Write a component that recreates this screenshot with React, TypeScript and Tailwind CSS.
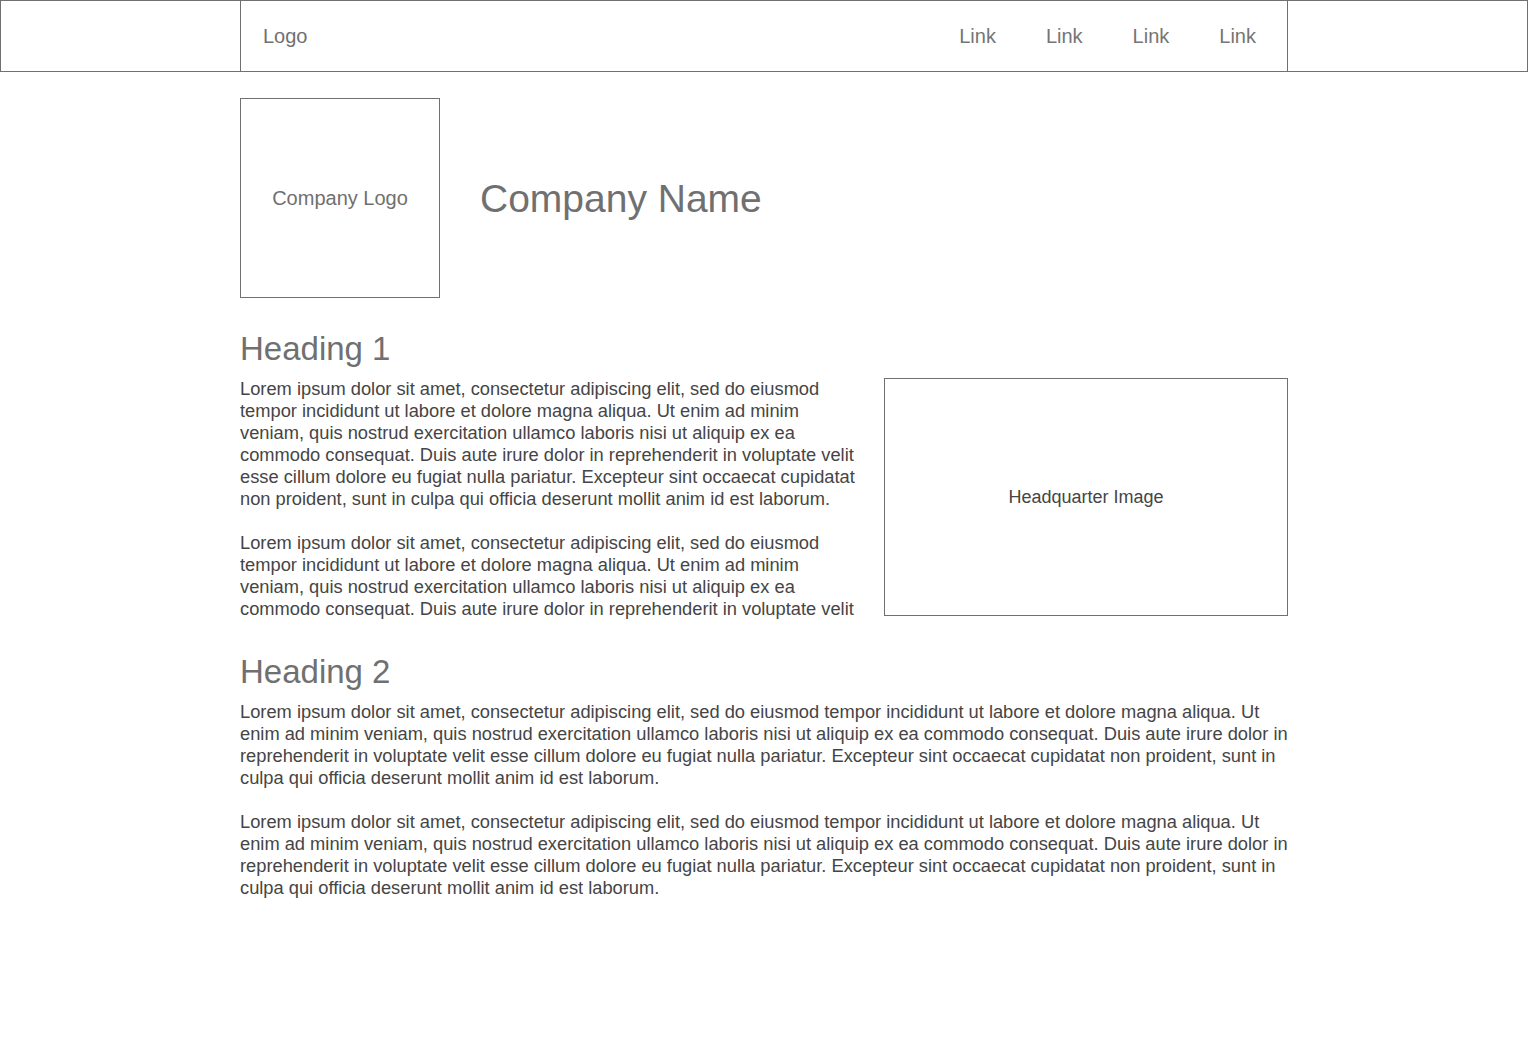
import React from 'react';

const LOREM =
  'Lorem ipsum dolor sit amet, consectetur adipiscing elit, sed do eiusmod tempor incididunt ut labore et dolore magna aliqua. Ut enim ad minim veniam, quis nostrud exercitation ullamco laboris nisi ut aliquip ex ea commodo consequat. Duis aute irure dolor in reprehenderit in voluptate velit esse cillum dolore eu fugiat nulla pariatur. Excepteur sint occaecat cupidatat non proident, sunt in culpa qui officia deserunt mollit anim id est laborum.';

// second paragraph in the narrow column is cut short in the design
const LOREM_SHORT =
  'Lorem ipsum dolor sit amet, consectetur adipiscing elit, sed do eiusmod tempor incididunt ut labore et dolore magna aliqua. Ut enim ad minim veniam, quis nostrud exercitation ullamco laboris nisi ut aliquip ex ea commodo consequat. Duis aute irure dolor in reprehenderit in voluptate velit';

const links = ['Link', 'Link', 'Link', 'Link'];

export default function App() {
  return (
    <div className="min-h-screen bg-white font-['Liberation_Sans',Arial,sans-serif] text-[#707070]">
      {/* Top bar */}
      <header className="border border-[#707070]">
        <div className="mx-auto flex h-[70px] w-[1048px] items-center justify-between border-x border-[#707070] pl-[22px] pr-[31px]">
          <span className="text-[20px]">Logo</span>
          <nav className="flex gap-[50px] text-[20px]">
            {links.map((l, i) => (
              <a key={i} href="#" className="text-[#757575]">
                {l}
              </a>
            ))}
          </nav>
        </div>
      </header>

      <main className="mx-auto w-[1048px] pt-[26px]">
        {/* Company header */}
        <div className="flex items-center gap-10">
          <div className="flex h-[200px] w-[200px] items-center justify-center border border-[#707070] text-[20px]">
            Company Logo
          </div>
          <h1 className="text-[39px] leading-none">Company Name</h1>
        </div>

        {/* Section 1 */}
        <section className="mt-[31px]">
          <h2 className="text-[33px] leading-[40px]">Heading 1</h2>
          <div className="mt-[9px] flex items-start gap-7">
            <div className="flex-1 text-[18.3px] leading-[22px] text-[#454545]">
              <p className="mb-[22px]">{LOREM}</p>
              <p>{LOREM_SHORT}</p>
            </div>
            <div className="flex h-[238px] w-[404px] items-center justify-center border border-[#707070] text-[18px] text-[#454545]">
              Headquarter Image
            </div>
          </div>
        </section>

        {/* Section 2 */}
        <section className="mt-[32px]">
          <h2 className="text-[33px] leading-[40px]">Heading 2</h2>
          <div className="mt-[9px] text-[18.3px] leading-[22px] text-[#454545]">
            <p className="mb-[22px]">{LOREM}</p>
            <p>{LOREM}</p>
          </div>
        </section>
      </main>
    </div>
  );
}
